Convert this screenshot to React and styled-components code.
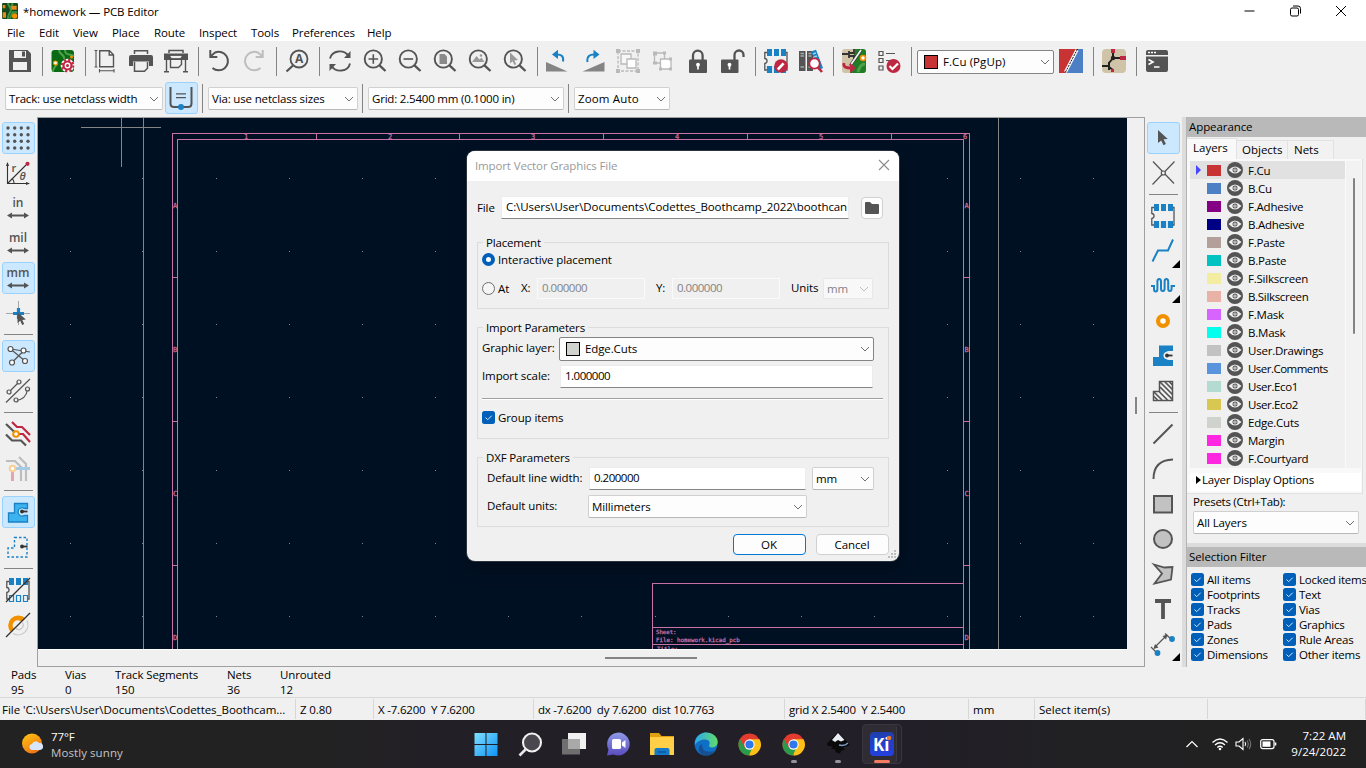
import React from 'react';
import styled, { createGlobalStyle } from 'styled-components';

const INK = '#545454';
const BLUE = '#1a81c4';
const RED = '#bf2641';
const ORANGE = '#f29100';
const PINK = '#c872a8';

const Global = createGlobalStyle`
  *, *::before, *::after { box-sizing: border-box; }
  body {
    margin: 0; overflow: hidden; font: 11.5px/15px "Open Sans", "Noto Sans", sans-serif; letter-spacing: -0.11px;
    color: #000; background: #f0f0f0;
  }
`;
const tracking = p => (p.$ls === undefined ? 'inherit' : p.$ls + 'px');

/* ---------- shell ---------- */
const Window = styled.div`
  width: 1366px; height: 768px; display: flex; flex-direction: column; position: relative; overflow: hidden;
  background: #f0f0f0; white-space: nowrap;
`;
const TitleBar = styled.header`
  height: 24px; background: #fff; display: flex; align-items: center; padding: 0 2px 2px 2px;
`;
const Title = styled.span`margin-left: 5px; flex: 1;`;
const WinButton = styled.span`
  width: 46px; height: 20px; display: flex; align-items: center; justify-content: center;
`;
const MenuBar = styled.nav`
  height: 17px; background: #fff; display: flex; align-items: center; padding-left: 7px;
`;
const MenuItem = styled.span`width: ${p => p.$w}px;`;
const Toolbar = styled.div`
  display: flex; align-items: center; height: ${p => p.$h}px; padding: 0 0 ${p => p.$pb || 0}px ${p => p.$pad}px;
`;
const Tool = styled.div`
  width: 35px; height: 35px; padding-left: 5px; display: flex; align-items: center;
`;
const VDivider = styled.i`
  width: ${p => p.$w || 8}px; height: 29px; flex: none; display: flex; justify-content: center;
  &::before { content: ""; width: 1px; background: #848484; }
`;
const Picture = styled.svg`
  width: ${p => p.$s || 24}px; height: ${p => p.$s || 24}px; flex: none; display: block; overflow: visible;
`;
const Combo = styled.div`
  width: ${p => p.$w}px; height: ${p => p.$h || 23}px; flex: none; display: flex; align-items: center;
  padding: 0 3px ${p => (p.$dark ? 1 : 0)}px ${p => p.$pl || 3}px; background: ${p => (p.$off ? '#f8f8f8' : '#fdfdfd')};
  border: 1px solid ${p => (p.$off ? '#e8e8e8' : p.$dark ? '#848484' : '#d0d0d0')};
  border-bottom-color: ${p => (p.$off ? '#e8e8e8' : p.$dark ? '#848484' : '#b8b8b8')};
  border-radius: 2px; color: ${p => (p.$off ? '#838383' : '#000')}; letter-spacing: ${tracking}; margin-top: ${p => p.$mt || 0}px;
  > span { flex: 1; }
`;
const Swatch = styled.i`
  width: ${p => p.$w || 14}px; height: ${p => p.$h || 14}px; flex: none; background: ${p => p.$c};
  border: ${p => (p.$line ? '1px solid #000' : 'none')}; margin-right: ${p => p.$mr || 5}px;
`;
const Toggle = styled.div`
  width: 33px; height: 32px; display: flex; align-items: center; padding-left: 3px; border-radius: 3px;
  border: 1px solid ${p => (p.$on ? '#99d1ff' : 'transparent')}; background: ${p => (p.$on ? '#cce8ff' : 'transparent')};
  position: relative; margin-top: ${p => p.$mt || 0}px;
`;

/* ---------- body ---------- */
const Body = styled.main`height: 550px; display: flex;`;
const SideBar = styled.aside`
  width: ${p => p.$w}px; padding: 4px 0 0 2px; display: flex; flex-direction: column; flex: none;
`;
const SideCell = styled.div`height: 35px; flex: none; padding-top: 1px;`;
const HDivider = styled.i`
  height: 8px; flex: none; width: 29px; margin-left: 2px; padding-top: 3px;
  &::before { content: ""; display: block; height: 1px; background: #848484; }
`;
const Flyout = styled.i`
  position: absolute; right: -1px; bottom: -2px; border: 4px solid transparent; border-right-color: #000; border-bottom-color: #000;
`;
const Viewport = styled.section`
  width: 1108px; height: 550px; flex: none; border: 1px solid #a0a0a0; display: grid;
  grid-template: 531px 1fr / 1089px 1fr;
`;
const Board = styled.svg`width: 1089px; height: 531px; display: block; background: #001023;`;
const VScroll = styled.div`
  padding: 279px 0 0 8px;
  &::before { content: ""; display: block; width: 2px; height: 17px; background: #848484; }
`;
const HScroll = styled.div`
  border-top: 1px solid #fff; padding: 7px 0 0 567px;
  &::before { content: ""; display: block; width: 92px; height: 2px; background: #848484; }
`;
const Sash = styled.i`width: 4px; flex: none; background: #dcdcdc;`;

/* ---------- right panel ---------- */
const Panel = styled.aside`
  width: 180px; display: flex; flex-direction: column; border-left: 1px solid #b4b4b4;
`;
const Caption = styled.h2`
  margin: 0; height: 20px; padding-left: 2px; background: #b9b9b9; font: inherit; line-height: 19px; flex: none;
  letter-spacing: -0.08px;
`;
const Tabs = styled.div`display: flex; height: 22px; align-items: flex-end; padding-top: 1px; flex: none;`;
const Tab = styled.span`
  width: ${p => p.$w}px; height: ${p => (p.$on ? 21 : 19)}px; padding-left: ${p => p.$pl}px; line-height: 18px;
  background: ${p => (p.$on ? '#f9f9f9' : '#f2f2f2')}; border: 1px solid #e2e2e2; border-left-width: 0; border-bottom: 0;
  letter-spacing: 0;
`;
const TabPage = styled.div`
  height: 335px; width: 176px; flex: none; background: #f9f9f9; border-right: 1px solid #e0e0e0; border-bottom: 1px solid #e0e0e0; padding: 2px 1px 0 3px;
`;
const LayerArea = styled.div`display: flex; height: 307px;`;
const LayerList = styled.div`width: 155px; background: #f0f0f0; overflow: hidden;`;
const LayerScroll = styled.div`
  flex: 1; background: #f2f2f2; border-left: 1px solid #fafafa; padding: 17px 0 0 7px;
  &::before { content: ""; display: block; width: 2px; height: 156px; background: #848484; border-radius: 1px; }
`;
const LayerRow = styled.div`
  height: 18px; display: flex; align-items: center; padding-left: 5px; background: ${p => (p.$on ? '#e1e1e1' : 'none')};
`;
const Marker = styled.i`
  width: 12px; height: 10px; flex: none; padding-left: 1px;
  &::before { content: ""; display: ${p => (p.$on ? 'block' : 'none')}; width: 0; border: 5px solid transparent; border-left-color: #4646ff; border-right: 0; }
`;
const LayerName = styled.span`margin-left: 5px; letter-spacing: ${tracking};`;
const Disclosure = styled.div`
  height: 18px; margin-top: 5px; background: #fff; display: flex; align-items: center; padding: 0 0 5px 6px; letter-spacing: -0.22px;
  &::before { content: ""; border: 4px solid transparent; border-left: 5px solid #000; border-right: 0; margin-right: 1px; }
`;
const Presets = styled.div`
  height: 49px; padding-left: 6px; flex: none; display: flex; flex-direction: column; gap: 2px; letter-spacing: -0.28px;
`;
const Gap = styled.i`height: 4px; flex: none; background: #dcdcdc;`;
const Filters = styled.div`
  display: grid; grid-template-columns: 92px 88px; grid-auto-rows: 15px; padding: 5px 0 0 4px; width: 184px; letter-spacing: -0.24px;
`;
const CheckLabel = styled.label`display: flex; align-items: center; gap: 3px;`;

/* ---------- bottom ---------- */
const MsgPanel = styled.div`height: 30px; display: flex; padding-left: 11px; flex: none;`;
const Msg = styled.div`width: ${p => p.$w}px;`;
const StatusBar = styled.footer`
  height: 23px; flex: none; border-top: 1px solid #d7d7d7; display: flex; padding-top: 1px;
`;
const Field = styled.span`
  width: ${p => p.$w}px; border-right: 1px solid #d7d7d7; padding-left: ${p => p.$pl || 4}px; height: 20px; line-height: 21px;
  white-space: pre; letter-spacing: ${tracking}; flex: none;
`;
const TaskBar = styled.div`
  height: 48px; flex: none; display: flex; align-items: center; color: #fff;
  background: linear-gradient(90deg, #222222 0, #222222 300px, #221f27 480px, #221f28 900px, #212123 1100px, #212121 100%);
`;
const Weather = styled.div`width: 463.5px; display: flex; align-items: center; padding: 1px 0 0 21px; gap: 7px; line-height: 16px;`;
const Dim = styled.div`color: #c4c4c4; letter-spacing: 0.08px;`;
const TaskCell = styled.div`
  width: 44px; height: 48px; position: relative; display: flex; align-items: center; justify-content: center;
`;
const ActiveTile = styled.div`
  width: 40px; height: 40px; margin-left: 1px; border-radius: 4px; background: #2f2c34; border: 1px solid #39363e; display: flex;
  align-items: center; justify-content: center; box-shadow: inset -4px 0 0 0 #28252d, inset -5px 0 0 0 #3b3840;
`;
const Running = styled.i`
  position: absolute; bottom: 5px; left: ${p => (p.$on ? 14.5 : 19.5)}px; width: ${p => (p.$on ? 16 : 6)}px; height: 3px; border-radius: 2px;
  background: ${p => (p.$on ? '#f47b62' : '#96949a')};
`;
const Tray = styled.div`margin-left: auto; display: flex; align-items: center; padding-right: 20px;`;
const TrayIcon = styled(Picture)`width: ${p => p.$w}px; height: 16px; margin-right: ${p => p.$mr}px;`;
const Clock = styled.div`width: 69px; text-align: right; line-height: 16px; letter-spacing: 0.02px;`;

/* ---------- dialog ---------- */
const Dialog = styled.div`
  position: absolute; left: 467px; top: 151px; width: 432px; height: 410px; border-radius: 8px; background: #f0f0f0;
  box-shadow: 0 0 0 1px #2a3440, 0 6px 18px rgba(0,0,0,.35); overflow: hidden; display: flex; flex-direction: column;
`;
const DialogTitle = styled.div`
  height: 30px; background: #fff; color: #9a9a9a; display: flex; align-items: center; justify-content: space-between; padding: 0 9px 2px 8px;
  flex: none; letter-spacing: -0.13px;
`;
const FileRow = styled.div`display: flex; height: 23px; margin: 15px 0 0 10px; align-items: center; flex: none;`;
const Label = styled.span`
  width: ${p => p.$w}px; flex: none; padding: 0 0 ${p => p.$up || 0}px ${p => p.$pl || 0}px; letter-spacing: ${tracking};
`;
const Input = styled.div`
  width: ${p => p.$w}px; height: ${p => p.$h || 23}px; padding-left: ${p => p.$pl || 4}px; line-height: ${p => (p.$off ? 18 : 20)}px;
  overflow: hidden; flex: none;
  background: ${p => (p.$off ? '#f0f0f0' : '#fff')}; color: ${p => (p.$off ? '#838383' : '#000')};
  border: 1px solid ${p => (p.$off ? '#fafafa' : '#ececec')}; border-bottom-color: ${p => (p.$off ? '#fafafa' : '#858585')};
  letter-spacing: ${p => (p.$ls === undefined ? -0.5 : p.$ls)}px;
`;
const BrowseButton = styled.div`
  width: 22px; height: 22px; margin-left: 12px; border: 1px solid #d0d0d0; border-radius: 4px; background: #fdfdfd; display: flex;
  align-items: center; justify-content: center;
`;
const Group = styled.section`
  margin: ${p => p.$mt}px 10px 0; height: ${p => p.$h}px; border: 1px solid #dcdcdc; flex: none; display: flex; flex-direction: column;
`;
const Legend = styled.span`
  align-self: flex-start; margin: -8px 0 0 5px; padding: 0 3px; background: #f0f0f0; height: 15px; letter-spacing: -0.17px;
`;
const FormRow = styled.div`
  display: flex; align-items: center; height: ${p => p.$h}px; margin-top: ${p => p.$mt || 0}px; padding-left: ${p => p.$pl || 4}px; flex: none;
`;
const Radio = styled.i`
  width: 13px; height: 13px; flex: none; border-radius: 50%; margin-right: 3px;
  border: ${p => (p.$on ? '4px solid #005fb8' : '1px solid #6e6e6e')}; background: ${p => (p.$on ? '#fff' : '#f5f5f5')};
`;
const Rule = styled.i`height: 2px; flex: none; margin: 10px 5px 0 4px; border-top: 1px solid #a0a0a0; border-bottom: 1px solid #fff;`;
const Buttons = styled.div`display: flex; justify-content: flex-end; gap: 10px; margin: 7px 10px 0; flex: none;`;
const PushButton = styled.div`
  width: 73px; height: 21px; border-radius: 4px; background: #fdfdfd; text-align: center; line-height: 20px; padding-right: 1px;
  border: 1px solid ${p => (p.$default ? '#0078d4' : '#d0d0d0')};
`;
const Grip = styled(Picture)`position: absolute; right: 2px; bottom: 1px; width: 10px; height: 10px;`;

/* ---------- icons ---------- */
const Svg = ({ children, s, ...r }) => (
  <Picture $s={s} viewBox="0 0 24 24" fill="none" stroke={INK} strokeWidth="1.6" {...r}>{children}</Picture>
);
const Chevron = ({ c = '#707070' }) => (
  <Picture $s={10} viewBox="0 0 10 10" fill="none" stroke={c} strokeWidth="1"><path d="M1 3l4 4 4-4" /></Picture>
);
const Check = () => (
  <Picture $s={13} viewBox="0 0 13 13"><rect width="13" height="13" rx="2.5" fill="#005fb8" /><path d="M3.500 6.500l2.200 2.200 4-4" fill="none" stroke="#d8eaff" strokeWidth="1" /></Picture>
);
const Eye = () => (
  <Picture $s={16} viewBox="0 0 16 16"><circle cx="8" cy="8" r="8" fill="#545454" /><path d="M1.500 8Q8 1 14.500 8 8 15 1.500 8z" fill="#f0f0f0" /><circle cx="8" cy="8" r="2.500" fill="#545454" /><circle cx="8" cy="8" r="1.600" fill="#f0f0f0" /><circle cx="8" cy="8" r=".7" fill="#545454" /></Picture>
);
const AppIcon = () => (
  <Svg s={16} stroke="none"><rect width="24" height="24" rx="2" fill="#13491c" /><path d="M9 0c0 6 6 6 4 12s-4 4-4 12M16 0l-3 8M23 14h-7l-4 9" stroke="#3c9441" strokeWidth="3" fill="none" /><path d="M1 3h4v5H1zM14 4h8v6h-8zM1 14h5v8H1z" fill="#e8891c" /><circle cx="19" cy="19.500" r="4" fill="#f29100" /></Svg>
);
const Magnifier = ({ children }) => (
  <Svg><circle cx="10.300" cy="10" r="8.600" strokeWidth="1.900" /><path d="M16.500 16.300l6 5.700" strokeWidth="2.400" />{children}</Svg>
);
const Chip = ({ bottom = BLUE }) => (
  <>
    <path d="M3 3.500H.8v6c3 .5 3 4.500 0 5v6.500H3M21 3.500h2v17.500h-2" strokeWidth="1.300" />
    <path d="M3 0h5v7H3zM10 0h5v7h-5zM17 0h5v7h-5z" fill={BLUE} stroke="none" />
    <path d="M3.500 17.500h4v6h-4zM10.500 17.500h4v6h-4zM17.500 17.500h4v6h-4z" fill={bottom} stroke={BLUE} strokeWidth="1.200" />
  </>
);
const Arrows = () => <path d="M1 19.500l5-3v2h12v-2l5 3-5 3v-2H6v2z" fill={INK} stroke="none" />;
const Pointer = ({ x = 0, y = 0 }) => <path transform={`translate(${x} ${y})`} d="M0 0v13l3.200-2.600 2.300 4.800 2.400-1.100-2.300-4.800 4.200-.4z" fill={INK} stroke="none" />;
const UnitText = styled.text`font: 600 ${p => p.$s || 12}px "Open Sans", sans-serif; letter-spacing: 0; fill: #545454; stroke: none; text-anchor: middle;`;
const Letter = styled.text`font: ${p => p.$w || 'bold'} ${p => p.$s}px "Open Sans", sans-serif; letter-spacing: 0; fill: #545454; stroke: none;`;
const ZoneHole = ({ r = 3, bg }) => (
  <>{bg && <circle cx="16" cy="11.500" r={r} fill={bg} stroke="none" />}<path d="M15 11.500h6.500" strokeWidth="1.800" stroke="#333" /><circle cx="16" cy="11.500" r="1.900" fill="#333" stroke="none" /></>
);

const I = {
  save: <Svg stroke="none"><path d="M1 1h18.500L23 4.500V23H1z" fill={INK} /><path d="M6 2h12v7H6zM5 13h14v8H5z" fill="#f0f0f0" /><path d="M14 2.500h3v5h-3z" fill={INK} /></Svg>,
  setup: (
    <Svg stroke="none"><rect x=".5" y="1" width="22.500" height="22" rx="3" fill="#0b6b14" /><path d="M8 1c0 5 6 4 5 9M14 1c0 5 4 4 9 6M2 23c0-5 3-5 4-9" stroke="#4da04a" strokeWidth="2" fill="none" /><circle cx="4.500" cy="14" r="2" fill="#fff" stroke={ORANGE} strokeWidth="1.200" /><circle cx="20.500" cy="8" r="1.500" fill={ORANGE} />
      <circle cx="16.500" cy="16.500" r="5.300" fill="none" stroke="#fff" strokeWidth="3" /><circle cx="16.500" cy="16.500" r="4" fill="#fff" stroke={RED} strokeWidth="2.200" /><circle cx="16.500" cy="16.500" r="5.800" fill="none" stroke={RED} strokeWidth="2" strokeDasharray="2.300 2.250" /><circle cx="16.500" cy="16.500" r="1.500" fill={RED} /></Svg>
  ),
  page: <Svg strokeWidth="1.400"><path d="M5.700 1.800h9.800l4 4v11.900H5.700zM15.200 2v4h4" /><path d="M.5 1.500h3M.5 18h3M2 1.500V18M5.500 20v3.500M20 20v3.500M5.500 21.700H20" strokeWidth="1.100" /></Svg>,
  print: <Svg strokeWidth="1.500"><path d="M5.500 5V1.700h13V5" /><path d="M2 6h20q2 0 2 2v9h-4v-4.500H4V17H0V8q0-2 2-2z" fill={INK} stroke="none" /><path d="M5.500 13v9.300h10l3-3V13" /></Svg>,
  plot: <Svg strokeWidth="1.500"><path d="M5 4V1.500h14V4" /><path d="M0 4.500h24v6.500H0z" fill={INK} stroke="none" /><path d="M6.500 8h11" stroke="#f0f0f0" strokeWidth="2.200" /><path d="M6.500 8v10.500h8l3-3V8M2.500 11v12M21.500 11v12M0 22.700h5M19 22.700h5" strokeWidth="1.400" /></Svg>,
  undo: <Svg strokeWidth="2"><path d="M5.500 19A9.300 9.300 0 108 3.500L4 7" /><path d="M3.300 1v7h7" /></Svg>,
  redo: <Svg strokeWidth="2" stroke="#bdbdbd"><path d="M18.500 19A9.300 9.300 0 1116 3.500L20 7" /><path d="M20.700 1v7h-7" /></Svg>,
  find: <Svg><circle cx="14" cy="10" r="8.500" strokeWidth="1.800" /><path d="M8 16.500L1.500 22.500" strokeWidth="2.200" /><Letter $s={12} x="9.900" y="14.300">A</Letter></Svg>,
  refresh: <Svg strokeWidth="1.900"><path d="M2 9.500C4 1 16 0 20.500 7M22 14.500C20 23 8 24 3.500 17" /><path d="M22.500 2v7H16z M1.500 22v-7H8z" fill={INK} stroke="none" /></Svg>,
  zin: <Magnifier><path d="M5.500 10h9.600M10.300 5.200v9.600" /></Magnifier>,
  zout: <Magnifier><path d="M5.500 10h9.600" /></Magnifier>,
  zpage: <Magnifier><path d="M6.500 5h5l2.500 2.500V15H6.500z" fill="#8a8a8a" stroke="none" /></Magnifier>,
  zobj: <Magnifier><path d="M4 13l4.500-6 3 3.500 2-2 3 4.500z" fill="#9a9a9a" stroke="none" /><circle cx="13" cy="6.500" r="1.300" fill="#9a9a9a" stroke="none" /></Magnifier>,
  zsel: <Magnifier><path d="M7 3.500v11l2.600-2.200 1.800 3.700 1.800-.8-1.800-3.800 3.600-.4z" fill="#9a9a9a" stroke="none" /></Magnifier>,
  ccw: <Svg><path d="M0 13l21.500 9.500H0z" fill="#848484" stroke="none" /><path d="M17 12.500C18 7 15 5 10 5.500" stroke={BLUE} strokeWidth="2" /><path d="M6 5.500L12 .8v9.200z" fill={BLUE} stroke="none" /></Svg>,
  cw: <Svg><path d="M23.500 13v9.500h-22z" fill="#848484" stroke="none" /><path d="M6.500 13C5.500 7 9.500 5 14 5.500" stroke={BLUE} strokeWidth="2" /><path d="M18.500 5.500L12.500 .8v9.200z" fill={BLUE} stroke="none" /></Svg>,
  group: <Svg stroke="#b9b9b9" strokeWidth="1.300"><path d="M2 2h20v20H2z" strokeDasharray="3 1.500" /><path d="M5 5h10v10H5z" fill="#f7f7f7" /><path d="M11 10h9v9h-9z" fill="#fff" /><path d="M0 0h4v4H0zM20 0h4v4h-4zM0 20h4v4H0zM20 20h4v4h-4z" fill="#b9b9b9" stroke="none" /></Svg>,
  ungroup: <Svg stroke="#b9b9b9" strokeWidth="1.300"><path d="M3.500 4h10v10h-10z" /><path d="M9.500 10h10.500v10H9.500z" fill="#fff" /><path d="M2 2.500h4v4H2zM12 2.500h3v3h-3zM2 12.500h4v3H2zM8 18.500h3v3H8zM18 8.500h3v3h-3zM18 18.500h3v3h-3z" fill="#b9b9b9" stroke="none" /></Svg>,
  lock: <Svg><path d="M7 11V6.500a4.800 4.800 0 019.600 0V11" strokeWidth="2.300" /><rect x="3" y="10.500" width="18" height="13.500" rx="1" fill={INK} stroke="none" /><circle cx="12" cy="15.700" r="1.900" fill="#fff" stroke="none" /><path d="M12 15v5.500" stroke="#fff" strokeWidth="1.700" /></Svg>,
  unlock: <Svg><path d="M13.500 11V6a4.500 4.500 0 019 0v2" strokeWidth="2.300" /><rect x="0" y="10.500" width="17.500" height="13.500" rx="1" fill={INK} stroke="none" /><circle cx="8.500" cy="15.700" r="1.900" fill="#fff" stroke="none" /><path d="M8.500 15v5.500" stroke="#fff" strokeWidth="1.700" /></Svg>,
  fpedit: <Svg><Chip /><circle cx="17" cy="17" r="6.800" fill={RED} stroke="none" /><path d="M13.800 20.500l5.800-6.200" stroke="#fff" strokeWidth="2.600" /></Svg>,
  libs: <Svg stroke="none"><path d="M0 2h6.500v20H0zM8 2h6v20H8z" fill={INK} /><path d="M1.500 4.500h3.500M1.500 7h3.500M1.500 18h3.500M9.500 4.500h3M9.500 7h3M9.500 18h3" stroke="#a7a7a7" /><path d="M12 2.500l5-1.700L24 19l-4 2z" fill={BLUE} /><path d="M14 5l3-1M15 8l3-1" stroke="#9fd0f0" /><circle cx="15.500" cy="14.500" r="5.200" fill="#fff" stroke={RED} strokeWidth="1.800" /><path d="M19 18.500l4 4.500" stroke={RED} strokeWidth="2.600" /></Svg>,
  update: <Svg stroke="none"><rect width="24" height="24" rx="3" fill="#cfc3a8" /><path d="M13 0h8q3 0 3 3v18q0 3-3 3H8z" fill="#207c25" /><path d="M23 15q-5 0-7 8" stroke="#4da04a" strokeWidth="3" fill="none" /><path d="M0 5h7M7 2v7M7 4h5V0M7 7h5v5" stroke="#333" strokeWidth="1.800" fill="none" /><circle cx="21" cy="9" r="2.500" fill="#fff" stroke={ORANGE} strokeWidth="1.600" /><path d="M19 1L8 17" stroke="#333" strokeWidth="3" /><path d="M19 1L8 17" stroke="#f4f4f4" strokeWidth="1.800" /><path d="M9 19c-5 0-8-1-7-5" stroke={RED} strokeWidth="2.800" fill="none" /><path d="M8 14l6 5-6 5z" fill={RED} /></Svg>,
  drc: <Svg strokeWidth="1.200"><path d="M2 2.500h4v4H2zM2 9.500h4v4H2zM2 17h4v4H2zM9 4.500h9M9 11.500h4" /><circle cx="16.500" cy="17" r="7" fill={RED} stroke="none" /><path d="M12.500 17l3 3 5.500-5.500" stroke="#fff" strokeWidth="2.200" /></Svg>,
  pair: <Svg stroke="none"><path d="M0 0h24v24H0z" fill="#4d7fc4" /><path d="M0 0h18.500L6 24H0z" fill="#c83434" /><path d="M18 1L6.500 23" stroke="#fff" strokeWidth="3.200" /><path d="M18.500 0L6 24" stroke="#111" strokeWidth="1" strokeDasharray="2 1" /></Svg>,
  schem: <Svg stroke="#222" strokeWidth="2"><rect width="24" height="24" rx="4" fill="#cfc3a8" stroke="none" /><path d="M0 17h7M11 4v5l-4 5M7 13v8M7 18l4 3M11 9h7" /><circle cx="11" cy="9" r="2.200" fill="#222" stroke="none" /><path d="M9 0h4v4H9zM18 7h6v4h-6zM9 20h3v3H9z" fill={RED} stroke="none" /></Svg>,
  console: <Svg stroke="none"><path d="M3 1h18q2 0 2 2v3H1V3q0-2 2-2zM1 7.500h22V21q0 2-2 2H3q-2 0-2-2z" fill={INK} /><path d="M3 3.500h2M6 3.500h2M9 3.500h2" stroke="#fff" strokeWidth="1.500" /><path d="M3.500 10.500l4.500 2.500-4.500 2.500M9 18h5.500" stroke="#fff" strokeWidth="1.600" fill="none" /></Svg>,
  track: <Svg><path d="M1.500 1v16.500q0 3.500 3.500 3.500h14q3.500 0 3.500-3.500V1" strokeWidth="2" /><path d="M7 7.800h10M7 11.700h10" strokeWidth="1.200" /><circle cx="12" cy="21" r="3" fill={BLUE} stroke="none" /></Svg>,

  grid: <Svg stroke="none" fill={INK}>{[2, 8.700, 15.300, 22].map(y => [2, 8.700, 15.300, 22].map(x => <circle key={x + '-' + y} cx={x} cy={y} r="1.700" />))}</Svg>,
  polar: <Svg strokeWidth="1.300" stroke="#333"><path d="M1.500 2v20.500H23M1.500 22.500L20 4M8 22.500q0-4-2.500-5" strokeWidth="1.100" /><path d="M0 5l1.500-4L3 5zM20 21l4 1.500-4 1.500z" fill="#333" stroke="none" /><circle cx="21.500" cy="2.800" r="2.100" fill={RED} stroke="none" /><Letter $w="600" $s={11} x="5.500" y="10.500">r</Letter><Letter $w="italic 600" $s={11} x="13.500" y="19">θ</Letter></Svg>,
  inch: <Svg><UnitText x="12" y="11">in</UnitText><Arrows /></Svg>,
  mil: <Svg><UnitText x="12" y="11">mil</UnitText><Arrows /></Svg>,
  mm: <Svg><UnitText x="12" y="11">mm</UnitText><Arrows /></Svg>,
  cursor: <Svg><path d="M0 12.500h24M12.500 0v24" stroke="#a5a5a5" strokeWidth="1" /><path d="M7 12.500h11M12.500 7v11" stroke={BLUE} strokeWidth="3.200" /><g transform="translate(11.500 11) scale(.85)"><Pointer /></g></Svg>,
  ratsnest: <Svg strokeWidth="1.200"><path d="M4.500 5L24 8M4.500 5L19 17M6 18.500L18 6.500" /><g fill="#fff"><circle cx="4.500" cy="5" r="2.500" /><circle cx="17.500" cy="6.500" r="2.500" /><circle cx="6" cy="18.500" r="2.500" /><circle cx="19" cy="17" r="2.500" /></g></Svg>,
  curved: <Svg strokeWidth="1.200"><path d="M0 23.500L24 0M3 13L13 3M10 21.500q10-1 11.500-11" /><g fill="#f0f0f0"><circle cx="3" cy="13" r="2" /><circle cx="13" cy="3" r="2" /><circle cx="10" cy="21" r="2" /><circle cx="21.500" cy="10" r="2" /></g></Svg>,
  contrast: <Svg strokeWidth="2.200"><path d="M0 2l10 9.500M0 12.500l6 6h9l5 5" /><path d="M6 0l5 5h5l8 8M12 12h5l7 8" stroke={RED} /><circle cx="10" cy="12" r="2.800" fill="#fff" stroke={ORANGE} strokeWidth="2" /></Svg>,
  netcol: <Svg stroke="#bdbdbd" strokeWidth="2.200"><path d="M0 4h9l6 6v14M13 0l7 7v17" /><path d="M7 11.500h17" stroke="#a3cbe6" strokeWidth="3" /><path d="M6.500 12v12" stroke="#e4a3b0" strokeWidth="3" /><circle cx="6.500" cy="11.500" r="2.800" fill="#fff" stroke="#f9cf93" strokeWidth="2" /></Svg>,
  zfill: <Svg><path d="M8.500 3.500h13v5h-3.500a4 4 0 100 7h3.500v6.500h-19v-9h6z" fill="#3cb3ee" stroke={BLUE} strokeWidth="1.300" /><ZoneHole bg="#cce8ff" r={3} /></Svg>,
  zline: <Svg><path d="M8.500 2.500h12.500v19.500h-19v-9h6.500z" stroke={BLUE} strokeDasharray="2.500 2" strokeWidth="1.400" /><ZoneHole /></Svg>,
  padsk: <Svg><Chip bottom="#f0f0f0" /><path d="M0 24L24 0" stroke="#333" strokeWidth="1.300" /></Svg>,
  viask: <Svg><path d="M5 19.500A9.800 9.800 0 1119.500 5.500L15.500 9a5 5 0 00-7.500 7z" fill={ORANGE} stroke="none" /><path d="M21 7.500A10 10 0 017 20.500M16.500 9.500a4.500 4.500 0 01-6.500 6" stroke="#c9c9c9" strokeWidth="1.200" /><path d="M0 24L24 0" stroke="#333" strokeWidth="1.200" /></Svg>,

  select: <Svg><Pointer x={7} y={4} /></Svg>,
  local: <Svg strokeWidth="1.200"><path d="M2 .5L23 22.500M23.500.5L1.500 23.500" /><circle cx="12.300" cy="12" r="2" fill="#f0f0f0" /></Svg>,
  footprint: <Svg><Chip /></Svg>,
  route: <Svg stroke={BLUE} strokeWidth="2"><path d="M1.500 22.500l5.500-11h10l5-11" /></Svg>,
  tune: <Svg stroke={BLUE} strokeWidth="2"><path d="M0 12h3v3q0 2.500 1.700 2.500t1.700-2.500V7.500q0-2.500 1.800-2.500t1.800 2.500v7q0 2.500 1.800 2.500t1.800-2.500v-7q0-2.500 1.800-2.500t1.800 2.500v7q0 2.500 1.700 2.500t1.700-2.500V12H24" /></Svg>,
  via: <Svg><circle cx="12" cy="12" r="4.900" stroke={ORANGE} strokeWidth="4.300" fill="#fff" /></Svg>,
  zone: <Svg><path d="M8 1.500h14V7h-4a4.500 4.500 0 100 9h4v6H2v-9h6z" fill={BLUE} stroke="none" /><ZoneHole bg="#f0f0f0" r={3.500} /></Svg>,
  keepout: <Svg strokeWidth="1.500"><path d="M8.500 2.500h13v19h-19v-9h6z" /><path d="M9 3l12.500 12.500M9 8l12.500 12.500M3 13l8 8M8.500 13l8 8M14 3l7.500 7.500M18.500 3l3 3M3 17.500l3.500 3.500" strokeWidth="1.700" /></Svg>,
  line: <Svg><path d="M2.500 21.500l19-19" strokeWidth="2" /></Svg>,
  arc: <Svg><path d="M2.500 22q0-19 19.500-19.500" strokeWidth="2" /></Svg>,
  rect: <Svg><path d="M3 4h18v16.500H3z" fill="#c2c2c2" strokeWidth="2" /></Svg>,
  circle: <Svg><circle cx="12" cy="12" r="9" fill="#c2c2c2" strokeWidth="2" /></Svg>,
  poly: <Svg><path d="M3 2.500l10.500 3 8-.5-1.500 12.500L3.500 21.500l7.500-10z" fill="#c2c2c2" strokeWidth="1.800" /></Svg>,
  text: <Svg><path d="M4 4h16M12 4v18" strokeWidth="3.800" /></Svg>,
  dim: <Svg strokeWidth="1.200"><path d="M0 15l6 6M14 1.500L21 8M3.500 15.500L15.500 3.500" /><path d="M2.500 17l1.500-5 3.500 3.500zM16.500 2.500l-5 1.500L15 7.500z" fill={INK} stroke="none" /><circle cx="6.500" cy="21" r="2.900" fill={BLUE} stroke="none" /><circle cx="21" cy="7" r="2.900" fill={BLUE} stroke="none" /></Svg>,
};

const Chrome = () => (
  <Svg s={23} stroke="none"><circle cx="12" cy="12" r="11.500" fill="#e33b2e" /><path d="M12 12v11.500A11.500 11.500 0 0022.500 6.500H12z" fill="#fbc116" /><path d="M2 6.300L7 15l8 1-4 7.500A11.500 11.500 0 012 6.300z" fill="#2a9b4a" /><circle cx="12" cy="12" r="5.400" fill="#fff" /><circle cx="12" cy="12" r="4.300" fill="#2e77ec" /></Svg>
);
const KiLabel = styled.text`font: bold 17px "Open Sans", sans-serif; letter-spacing: 0; fill: #fff; stroke: none;`;

const TASKS = [
  [<Svg stroke="none"><defs><linearGradient id="win" x2="1" y2="1"><stop stopColor="#7fe0ff" /><stop offset="1" stopColor="#0f93f5" /></linearGradient></defs><path d="M.5 1h11v11H.5zM12.500 1h11v11h-11zM.5 13h11v11H.5zM12.500 13h11v11h-11z" fill="url(#win)" /></Svg>],
  [<Svg><circle cx="14" cy="10.500" r="9" stroke="#f0f0f0" strokeWidth="2.100" fill="#4a474e" /><path d="M7.500 17.500l-6 6" stroke="#e8e8e8" strokeWidth="2.600" /></Svg>],
  [<Svg stroke="none"><path d="M6 1h18v16H6z" fill="#f1f1f1" /><path d="M0 7h18v15.500H0z" fill="#6f6f6f" /><path d="M6 7h12v10H6z" fill="#a9a9a9" /></Svg>],
  [<Svg stroke="none"><defs><linearGradient id="chat" x2="0" y2="1"><stop stopColor="#8f9be6" /><stop offset="1" stopColor="#5a4cc0" /></linearGradient></defs><path d="M12.500.5a11.500 11.500 0 11-5 22L1 23.500l1.500-6A11.500 11.500 0 0112.500.5z" fill="url(#chat)" /><rect x="6" y="7" width="9" height="10" rx="1.500" fill="#fff" /><path d="M16 10.500l3.500-2.500v8L16 13.500z" fill="#fff" /></Svg>],
  [<Svg stroke="none"><path d="M0 1h9l2.500 3H24v5H0z" fill="#e0a10e" /><path d="M0 5h24v18H0z" fill="#ffcf48" /><path d="M4.500 23v-5q0-2 2-2h11q2 0 2 2v5z" fill="#1479c9" /><path d="M8 20h8" stroke="#0a5797" strokeWidth="1.400" /></Svg>],
  [<Svg stroke="none"><defs><linearGradient id="edge" x2="1"><stop stopColor="#2fa9ee" /><stop offset="1" stopColor="#5fdc6a" /></linearGradient></defs><circle cx="12" cy="12" r="11.500" fill="#0f6fc4" /><path d="M1 9.500C3 3 8 .5 12 .5c7 0 12 5 11.700 9.500-.3 4-3 5.500-6 5.500-2 0-3.200-1-2.500-2.500 1.500-2.500-.5-5.500-4-5.500C7 7.500 3.500 9 1 13z" fill="url(#edge)" /><path d="M8 12c-.5 7 5 9 13 7-3 4-8 5-12 4-6-3-5-9-1-11z" fill="#184f91" /></Svg>],
  [<Chrome />],
  [<Chrome />, 'run'],
  [<Svg stroke="none"><path d="M12 0l11 11.500q1.500 2-2 2.800l-4 1.200 2 2-4 1.500-1 2.500-4-1-1-3-4-1 2-1.700-4-.8q-3-1-1.500-3z" fill="#0a0a0a" /><path d="M12 1l6.500 7-3.500 1.500-3-1.500-3 2-3-2z" fill="#e9eef5" /><path d="M13 13c4 1 7 0 9-2" stroke="#7a9cc4" strokeWidth="1.500" fill="none" /></Svg>, 'run'],
];

const LAYERS = [
  ['F.Cu', '#c83434'], ['B.Cu', '#4d7fc4'], ['F.Adhesive', '#840084'], ['B.Adhesive', '#000084', -0.28], ['F.Paste', '#b4a09a'],
  ['B.Paste', '#00c2c2'], ['F.Silkscreen', '#f2eda1'], ['B.Silkscreen', '#e8b2a7', -0.32], ['F.Mask', '#d864ff'], ['B.Mask', '#02ffee'],
  ['User.Drawings', '#c2c2c2'], ['User.Comments', '#5994dc', -0.52], ['User.Eco1', '#b4dbd2', -0.4], ['User.Eco2', '#d8c852', -0.4],
  ['Edge.Cuts', '#d0d2cd'], ['Margin', '#ff26e2'], ['F.Courtyard', '#ff26e2'],
];
const FILTERS = ['All items', 'Locked items', 'Footprints', 'Text', 'Tracks', 'Vias', 'Pads', 'Graphics', 'Zones', 'Rule Areas', 'Dimensions', 'Other items'];
const MENUS = [['File', 32], ['Edit', 34], ['View', 39], ['Place', 42], ['Route', 45], ['Inspect', 52], ['Tools', 41], ['Preferences', 75], ['Help', 40]];
const TOP = ['save', '|', 'setup', '|', 'page', 'print', 'plot', '|', 'undo', 'redo', '|', 'find', '|', 'refresh', 'zin', 'zout', 'zpage', 'zobj', 'zsel', '|', 'ccw', 'cw', 'group', 'ungroup', 'lock', 'unlock', '|', 'fpedit', 'libs', '|', 'update', 'drc', '|'];
const LEFT = ['grid*', 'polar', 'inch', 'mil', 'mm*', 'cursor', '|', 'ratsnest*', 'curved', '|', 'contrast', 'netcol', '|', 'zfill*', 'zline', '|', 'padsk', 'viask'];
const RIGHT = ['select*', 'local', '|', 'footprint', 'route>', 'tune>', 'via', 'zone', 'keepout', '|', 'line', 'arc', 'rect', 'circle', 'poly', 'text', 'dim>'];

const tools = list => list.map((k, i) => (k === '|' ? <VDivider key={i} /> : <Tool key={i}>{I[k]}</Tool>));
const sideTools = list => list.map((k, i) => (k === '|' ? <HDivider key={i} /> : (
  <SideCell key={i}><Toggle $on={k.endsWith('*')}>{I[k.replace(/[*>]/, '')]}{k.endsWith('>') && <Flyout />}</Toggle></SideCell>
)));

const Stroke = styled.text`
  font: ${p => p.$s || 7}px "DejaVu Sans Mono", monospace; letter-spacing: 0; fill: ${PINK}; stroke: ${PINK}; stroke-width: 0.25px;
  text-anchor: ${p => (p.$mid ? 'middle' : 'start')}; white-space: pre;
`;
const DOT_X = [70, 142, 216, 289, 362, 435, 508, 581, 655, 728, 801, 874, 947, 1020, 1093];
const DOT_Y = [178, 251, 324, 397, 470, 543, 616];

function Canvas() {
  return (
    <Board viewBox="38 118 1089 531" shapeRendering="crispEdges">
      {DOT_Y.map(y => DOT_X.map(x => <rect key={x + '.' + y} x={x} y={y} width="1" height="1" fill="#848484" />))}
      <path d="M143.500 118v531M998.500 118v531M81 127.500h80M121.500 118v49" stroke="#848484" fill="none" />
      <path d="M172.500 649V133.500H969.500V649M177.500 649V139.500H963.500V649" stroke={PINK} fill="none" />
      <path d="M316.500 134v5M459.500 134v5M603.500 134v5M747.500 134v5M891.500 134v5M173 277.500h5M173 421.500h5M173 565.500h5M964 277.500h5M964 421.500h5M964 565.500h5" stroke={PINK} />
      <path d="M652.500 649V583.500H963M653 627.500h311M653 644.500h311" stroke={PINK} fill="none" />
      {['1', '2', '3', '4', '5', '6'].map((n, i) => <Stroke key={n} $mid x={246 + i * 144 - (i > 1 ? 1 : 0)} y="139">{n}</Stroke>)}
      {['A', 'B', 'C', 'D'].map((n, i) => (
        <React.Fragment key={n}><Stroke $mid x="175" y={208 + i * 144}>{n}</Stroke><Stroke $mid x="966.500" y={208 + i * 144}>{n}</Stroke></React.Fragment>
      ))}
      <Stroke $s={5.700} x="656" y="634">Sheet:</Stroke>
      <Stroke $s={5.800} x="656" y="642">File: homework.kicad_pcb</Stroke>
      <Stroke $s={5.800} x="657" y="651">Title:</Stroke>
    </Board>
  );
}

function ImportDialog() {
  return (
    <Dialog>
      <DialogTitle>
        <span>Import Vector Graphics File</span>
        <Picture $s={12} viewBox="0 0 12 12" stroke="#8c8c8c" strokeWidth="1.100"><path d="M1 1l10 10M11 1L1 11" /></Picture>
      </DialogTitle>
      <FileRow>
        <Label $w={24}>File</Label>
        <Input $w={348} $ls={-0.08}>C:\Users\User\Documents\Codettes_Boothcamp_2022\boothcan</Input>
        <BrowseButton><Picture $s={14} viewBox="0 0 14 14"><path d="M0 2q0-1 1-1h4l2 2h6q1 0 1 1v8q0 1-1 1H1q-1 0-1-1z" fill={INK} /></Picture></BrowseButton>
      </FileRow>
      <Group $mt={23} $h={67}>
        <Legend>Placement</Legend>
        <FormRow $h={17} $mt={1}><Radio $on />Interactive placement</FormRow>
        <FormRow $h={21} $mt={10}>
          <Radio /><Label $w={23}>At</Label><Label $w={16} $up={2}>X:</Label><Input $off $w={108} $h={21}>0.000000</Input>
          <Label $w={27} $pl={11} $up={2}>Y:</Label><Input $off $w={108} $h={21}>0.000000</Input>
          <Label $w={43} $pl={11} $up={2}>Units</Label><Combo $off $w={50} $h={21}><span>mm</span><Chevron c="#bdbdbd" /></Combo>
        </FormRow>
      </Group>
      <Group $mt={18} $h={112}>
        <Legend>Import Parameters</Legend>
        <FormRow $h={24} $mt={2}><Label $w={77} $up={3}>Graphic layer:</Label><Combo $dark $w={315} $h={24} $pl={6}><Swatch $c="#d0d2cd" $line /><span>Edge.Cuts</span><Chevron /></Combo></FormRow>
        <FormRow $h={23} $mt={4}><Label $w={78} $up={2}>Import scale:</Label><Input $w={313}>1.000000</Input></FormRow>
        <Rule />
        <FormRow $h={15} $mt={10}><CheckLabel><Check />Group items</CheckLabel></FormRow>
      </Group>
      <Group $mt={18} $h={70}>
        <Legend>DXF Parameters</Legend>
        <FormRow $h={23} $mt={2} $pl={9}><Label $w={102} $up={2}>Default line width:</Label><Input $w={217}>0.200000</Input><Label $w={6} /><Combo $w={62}><span>mm</span><Chevron /></Combo></FormRow>
        <FormRow $h={23} $mt={5} $pl={9}><Label $w={101} $up={2}>Default units:</Label><Combo $w={219}><span>Millimeters</span><Chevron /></Combo></FormRow>
      </Group>
      <Buttons><PushButton $default>OK</PushButton><PushButton>Cancel</PushButton></Buttons>
      <Grip viewBox="0 0 10 10" fill="#bdbdbd"><path d="M7 0h2v2H7zM7 3h2v2H7zM4 3h2v2H4zM7 6h2v2H7zM4 6h2v2H4zM1 6h2v2H1z" /></Grip>
    </Dialog>
  );
}

export default function App() {
  return (
    <Window>
      <Global />
      <TitleBar>
        <AppIcon /><Title>*homework — PCB Editor</Title>
        <WinButton><Picture $s={11} viewBox="0 0 11 11" stroke="#000"><path d="M.5 5h10" /></Picture></WinButton>
        <WinButton><Picture $s={11} viewBox="0 0 11 11" stroke="#000" fill="none"><rect x=".5" y="2" width="8" height="8" rx="1.500" /><path d="M3 0h5q2.500 0 2.500 2.500v5" /></Picture></WinButton>
        <WinButton><Picture $s={11} viewBox="0 0 11 11" stroke="#000"><path d="M0 0l10 10M10 0l-10 10" /></Picture></WinButton>
      </TitleBar>
      <MenuBar>{MENUS.map(([m, w]) => <MenuItem key={m} $w={w}>{m}</MenuItem>)}</MenuBar>
      <Toolbar $h={40} $pad={3}>
        {tools(TOP)}
        <Label $w={2} />
        <Combo $dark $w={137} $h={24} $pl={6} $mt={2} $ls={0.08}><Swatch $c="#c83434" $line /><span>F.Cu (PgUp)</span><Chevron /></Combo>
        <Tool>{I.pair}</Tool>{tools(['|', 'schem', '|', 'console'])}
      </Toolbar>
      <Toolbar $h={36} $pad={5} $pb={1}>
        <Combo $w={158} $ls={-0.2}><span>Track: use netclass width</span><Chevron /></Combo>
        <Label $w={2} /><Toggle $on $mt={-1}>{I.track}</Toggle><VDivider $w={9} /><Label $w={1} />
        <Combo $w={150} $ls={-0.16}><span>Via: use netclass sizes</span><Chevron /></Combo><VDivider $w={9} /><Label $w={1} />
        <Combo $w={196} $ls={-0.2}><span>Grid: 2.5400 mm (0.1000 in)</span><Chevron /></Combo><VDivider $w={9} /><Label $w={1} />
        <Combo $w={96} $ls={0.15}><span>Zoom Auto</span><Chevron /></Combo>
      </Toolbar>
      <Body>
        <SideBar $w={37}>{sideTools(LEFT)}</SideBar>
        <Viewport><Canvas /><VScroll /><HScroll /></Viewport>
        <SideBar $w={37}>{sideTools(RIGHT)}</SideBar>
        <Sash />
        <Panel>
          <Caption>Appearance</Caption>
          <Tabs><Tab $on $w={50} $pl={6}>Layers</Tab><Tab $w={51} $pl={5}>Objects</Tab><Tab $w={46} $pl={6}>Nets</Tab></Tabs>
          <TabPage>
            <LayerArea>
              <LayerList>
                {LAYERS.map(([n, c, ls = -0.22], i) => (
                  <LayerRow key={n} $on={i === 0}><Marker $on={i === 0} /><Swatch $c={c} $h={11} $mr={6} /><Eye /><LayerName $ls={ls}>{n}</LayerName></LayerRow>
                ))}
              </LayerList>
              <LayerScroll />
            </LayerArea>
            <Disclosure>Layer Display Options</Disclosure>
          </TabPage>
          <Presets><span>Presets (Ctrl+Tab):</span><Combo $w={166} $ls={-0.11}><span>All Layers</span><Chevron /></Combo></Presets>
          <Gap />
          <Caption>Selection Filter</Caption>
          <Filters>{FILTERS.map(f => <CheckLabel key={f}><Check />{f}</CheckLabel>)}</Filters>
        </Panel>
      </Body>
      <MsgPanel>
        <Msg $w={54}>Pads<br />95</Msg><Msg $w={50}>Vias<br />0</Msg><Msg $w={112}>Track Segments<br />150</Msg><Msg $w={53}>Nets<br />36</Msg><Msg $w={80}>Unrouted<br />12</Msg>
      </MsgPanel>
      <StatusBar>
        <Field $w={296} $pl={2} $ls={-0.03}>File 'C:\Users\User\Documents\Codettes_Boothcam...</Field>
        <Field $w={78}>Z 0.80</Field><Field $w={160} $ls={-0.2}>{'X -7.6200  Y 7.6200'}</Field><Field $w={251} $ls={-0.23}>{'dx -7.6200  dy 7.6200  dist 10.7763'}</Field>
        <Field $w={184} $ls={-0.2}>{'grid X 2.5400  Y 2.5400'}</Field><Field $w={66} $ls={0}>mm</Field><Field $w={173} $ls={0}>Select item(s)</Field><Field $w={158} />
      </StatusBar>
      <TaskBar>
        <Weather>
          <Picture $s={23} viewBox="0 0 23 23"><defs><linearGradient id="sun" x2=".6" y2="1"><stop stopColor="#ffc90f" /><stop offset="1" stopColor="#f07318" /></linearGradient></defs><circle cx="11" cy="10.500" r="10" fill="url(#sun)" /><path d="M12 17a3 3 0 01-1-6 4 4 0 017-1 3.500 3.500 0 011 7z" fill="#d7e6fa" /></Picture>
          <div>77°F<Dim>Mostly sunny</Dim></div>
        </Weather>
        {TASKS.map(([icon, run], i) => <TaskCell key={i}>{icon}{run && <Running />}</TaskCell>)}
        <TaskCell>
          <ActiveTile><Svg stroke="none"><defs><linearGradient id="ki" x2="0" y2="1"><stop stopColor="#1f3fae" /><stop offset="1" stopColor="#2440e0" /></linearGradient></defs><rect width="24" height="24" rx="4" fill="url(#ki)" /><KiLabel x="3" y="18.500">Ki</KiLabel><circle cx="19" cy="6" r="2.300" fill="#f0762a" /></Svg></ActiveTile>
          <Running $on />
        </TaskCell>
        <Tray>
          <TrayIcon $w={12} $mr={14} viewBox="0 0 12 16" stroke="#fff" fill="none" strokeWidth="1.200"><path d="M.5 11L6 5.500 11.500 11" /></TrayIcon>
          <TrayIcon $w={16} $mr={7} viewBox="0 0 16 16" stroke="#fff" fill="none" strokeWidth="1.300"><path d="M.5 6.500q7.500-7 15 0M3 9q5-4.500 10 0M5.300 11.400q2.700-2.300 5.400 0" /><circle cx="8" cy="13" r="1.300" fill="#fff" stroke="none" /></TrayIcon>
          <TrayIcon $w={17} $mr={8} viewBox="0 0 17 16" stroke="#fff" fill="none" strokeWidth="1.100"><path d="M1 6h3l4-3.500v11L4 10H1zM10 6q1.300 2 0 4" /><path d="M12 4.500q2.500 3.500 0 7M14 3q3.500 5 0 10" stroke="#77757b" /></TrayIcon>
          <TrayIcon $w={17} $mr={0} viewBox="0 0 17 16" stroke="#fff" fill="none" strokeWidth="1.200"><rect x=".7" y="3.600" width="13.300" height="9" rx="2" /><path d="M15.500 6.500v3" strokeWidth="1.600" /><rect x="2.500" y="5.400" width="8" height="5.400" fill="#fff" stroke="none" /></TrayIcon>
          <Clock>7:22 AM<br />9/24/2022</Clock>
        </Tray>
      </TaskBar>
      <ImportDialog />
    </Window>
  );
}
